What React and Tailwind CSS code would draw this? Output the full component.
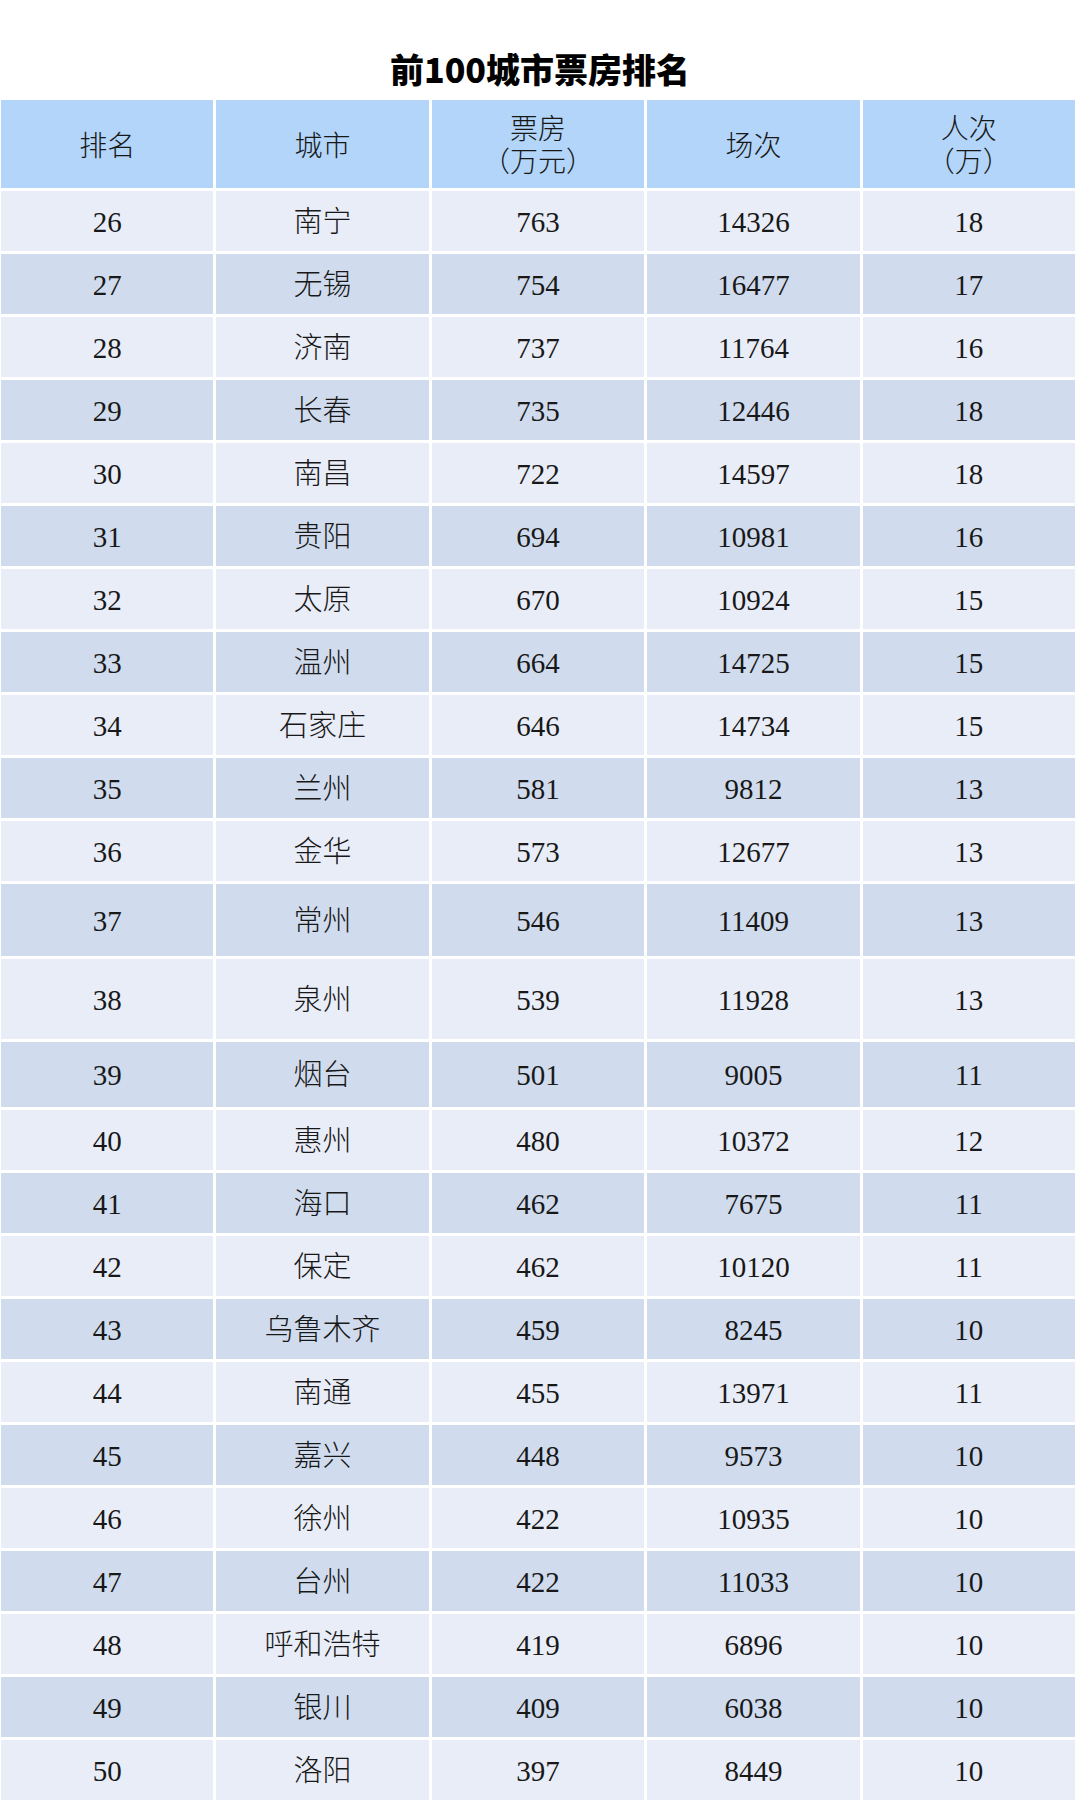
const rows = [
  ['26', '南宁', '763', '14326', '18'],
  ['27', '无锡', '754', '16477', '17'],
  ['28', '济南', '737', '11764', '16'],
  ['29', '长春', '735', '12446', '18'],
  ['30', '南昌', '722', '14597', '18'],
  ['31', '贵阳', '694', '10981', '16'],
  ['32', '太原', '670', '10924', '15'],
  ['33', '温州', '664', '14725', '15'],
  ['34', '石家庄', '646', '14734', '15'],
  ['35', '兰州', '581', '9812', '13'],
  ['36', '金华', '573', '12677', '13'],
  ['37', '常州', '546', '11409', '13'],
  ['38', '泉州', '539', '11928', '13'],
  ['39', '烟台', '501', '9005', '11'],
  ['40', '惠州', '480', '10372', '12'],
  ['41', '海口', '462', '7675', '11'],
  ['42', '保定', '462', '10120', '11'],
  ['43', '乌鲁木齐', '459', '8245', '10'],
  ['44', '南通', '455', '13971', '11'],
  ['45', '嘉兴', '448', '9573', '10'],
  ['46', '徐州', '422', '10935', '10'],
  ['47', '台州', '422', '11033', '10'],
  ['48', '呼和浩特', '419', '6896', '10'],
  ['49', '银川', '409', '6038', '10'],
  ['50', '洛阳', '397', '8449', '10'],
];

// a few rows in the source are taller than the rest
function rowHeight(rank) {
  if (rank === '37') return 'h-[72px]';
  if (rank === '38') return 'h-[80px]';
  if (rank === '39') return 'h-[65px]';
  return 'h-[60px]';
}

const headers = [
  ['排名'],
  ['城市'],
  ['票房', '（万元）'],
  ['场次'],
  ['人次', '（万）'],
];

export default function App() {
  return (
    <div className="w-[1080px] h-[1800px] bg-white overflow-hidden font-['Liberation_Serif','Noto_Sans_CJK_SC',serif] text-[#181818]">
      <div className="h-[100px] pt-[38px] flex items-center justify-center">
        <h1 className="text-[34px] leading-[40px] font-black font-['Noto_Sans_CJK_SC',sans-serif] text-black">
          前100城市票房排名
        </h1>
      </div>

      <div className="w-[1075px] pl-[1px] flex flex-col gap-[3px]">
        <div className="grid grid-cols-5 gap-[3px] h-[88px]">
          {headers.map((h, i) => (
            <div key={i} className="bg-[#b2d5f9] flex flex-col items-center justify-center pt-[4px] text-[28px] leading-[33px] font-light">
              {h.map((line) => (
                <span key={line}>{line}</span>
              ))}
            </div>
          ))}
        </div>

        {rows.map((r, idx) => (
          <div key={r[0]} className={`grid grid-cols-5 gap-[3px] ${rowHeight(r[0])}`}>
            {r.map((cell, i) => (
              <div
                key={i}
                className={`flex items-center justify-center pt-[3px] text-[29px] font-light ${
                  idx % 2 === 0 ? 'bg-[#e9edf7]' : 'bg-[#d0dcee]'
                }`}
              >
                {cell}
              </div>
            ))}
          </div>
        ))}
      </div>
    </div>
  );
}
